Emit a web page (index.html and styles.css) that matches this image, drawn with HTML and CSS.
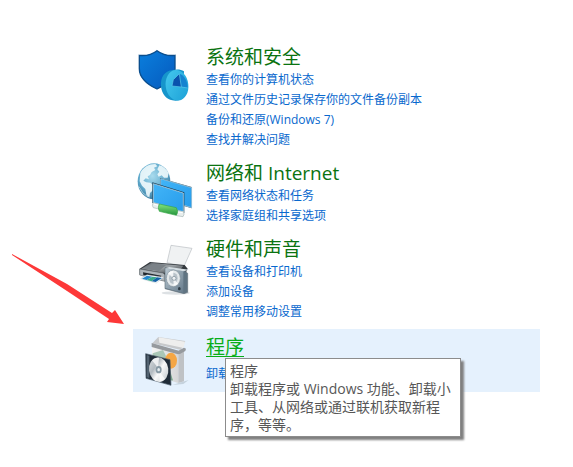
FILE: index.html
```
<!DOCTYPE html>
<html lang="zh-CN">
<head>
<meta charset="utf-8">
<title>控制面板</title>
<link rel="stylesheet" href="styles.css">
</head>
<body>
<main class="panel">
  <section class="category">
    <svg class="icon" viewBox="9 9 192 180" aria-hidden="true">
      <defs>
        <linearGradient id="shield" x1="0" y1="0" x2="1" y2="1"><stop offset="0" stop-color="#0a7fdd"/><stop offset="1" stop-color="#0559bd"/></linearGradient>
        <linearGradient id="pie" x1="0" y1="0" x2="1" y2="1"><stop offset="0" stop-color="#45c8ee"/><stop offset="1" stop-color="#1ba0d6"/></linearGradient>
      </defs>
      <path d="M81 29C67 40 47 45 28 43V83C28 114 54 131 81 144C108 131 135 114 135 83V43C116 45 96 40 81 29Z" fill="url(#shield)" stroke="#0b4e8d" stroke-width="4"/>
      <path d="M125 88C103 91 91 109 93 136C95 159 109 175 127 178C138 181 151 178 158 172L162 91C152 84 138 84 125 88Z" fill="#1695cb"/>
      <ellipse cx="141" cy="133" rx="34" ry="46" transform="rotate(-7 141 133)" fill="url(#pie)"/>
      <path d="M148 98C163 103 172 118 173 140L154 137Z" fill="#1583d0"/>
      <path d="M126 135L130 116L148 98L154 138Z" fill="#0952ad"/>
      <path d="M126 135L130 116L148 98L154 138L173 141M126 135L154 138" fill="none" stroke="#5bc8e8" stroke-width="2"/>
    </svg>
    <div class="text">
      <h2><a href="#security">系统和安全</a></h2>
      <ul>
        <li><a href="#status">查看你的计算机状态</a></li>
        <li><a href="#history">通过文件历史记录保存你的文件备份副本</a></li>
        <li><a href="#backup">备份和还原(Windows 7)</a></li>
        <li><a href="#troubleshoot">查找并解决问题</a></li>
      </ul>
    </div>
  </section>

  <section class="category">
    <svg class="icon" viewBox="9 12 192 180" aria-hidden="true">
      <defs>
        <radialGradient id="globe" cx=".45" cy=".35" r=".65"><stop offset="0" stop-color="#a9dbee"/><stop offset=".65" stop-color="#5fa9cb"/><stop offset="1" stop-color="#39799f"/></radialGradient>
        <linearGradient id="screen" x1="0" y1="0" x2="1" y2="1"><stop offset="0" stop-color="#42b5f8"/><stop offset="1" stop-color="#279ceb"/></linearGradient>
        <linearGradient id="plug" x1="0" y1="0" x2="0" y2="1"><stop offset="0" stop-color="#83e57e"/><stop offset="1" stop-color="#24933c"/></linearGradient>
      </defs>
      <ellipse cx="72" cy="76" rx="49" ry="54" fill="url(#globe)"/>
      <path d="M31 51C39 34 57 24 76 24L82 31L72 35L76 42L65 48L60 57L53 61L57 70L47 67L40 74L49 79L61 80L72 90L67 104L60 111L58 125L49 116L46 99L36 89L29 76ZM88 28C100 31 111 40 116 52L113 65H102L95 58L86 62L82 55L88 47L82 40Z" fill="#eff9fc" opacity=".9"/>
      <path d="M27 92Q36 113 54 123M95 119L109 105" fill="none" stroke="#c0e4ef" stroke-width="2"/>
      <path d="M90 66L185 93V157L90 128Z" fill="#17425e"/>
      <path d="M92 68L185 95V155L92 127Z" fill="url(#screen)" stroke="#bed9e6" stroke-width="2"/>
      <path d="M67 79L163 109V171L67 141Z" fill="#123c58"/>
      <path d="M70 83L160 111V168L70 140Z" fill="url(#screen)" stroke="#cde2ec" stroke-width="2"/>
      <path d="M70 140L87 144V159L70 155Q64 148 70 140ZM140 164L160 166Q165 175 159 182L140 179Z" fill="#e8eeed" stroke="#a7b6b5" stroke-width="2"/>
      <path d="M88 144L139 155Q147 166 139 178L88 166Q82 155 88 144Z" fill="url(#plug)" stroke="#35a644" stroke-width="2"/>
      <path d="M71 144L84 148M144 168L158 170" stroke="#fff" stroke-width="3"/>
    </svg>
    <div class="text">
      <h2><a href="#network">网络和 Internet</a></h2>
      <ul>
        <li><a href="#network-status">查看网络状态和任务</a></li>
        <li><a href="#homegroup">选择家庭组和共享选项</a></li>
      </ul>
    </div>
  </section>

  <section class="category">
    <svg class="icon" viewBox="9 0 192 180" aria-hidden="true">
      <defs>
        <linearGradient id="printer" x1="0" y1="0" x2="1" y2="1"><stop offset="0" stop-color="#555b62"/><stop offset=".5" stop-color="#9ca2a6"/><stop offset="1" stop-color="#30353a"/></linearGradient>
        <linearGradient id="speaker" x1="0" y1="0" x2="1" y2="1"><stop offset="0" stop-color="#b8c6cf"/><stop offset="1" stop-color="#667b8b"/></linearGradient>
      </defs>
      <ellipse cx="137" cy="171" rx="42" ry="5" fill="#dde1e4"/>
      <path d="M123 28L186 37L162 91L111 80Z" fill="#f0f2f3" stroke="#b9bec2" stroke-width="2"/>
      <path d="M29 98L60 78L164 87L173 98L158 131L106 128L29 115Z" fill="#34393e"/>
      <path d="M34 98L64 80L160 89L143 112L99 110Z" fill="url(#printer)"/>
      <path d="M68 84L108 87L87 105L43 99Z" fill="#7b8288"/>
      <path d="M29 99L99 111L105 117V136L29 117Z" fill="#aeb5ba" stroke="#62696e" stroke-width="2"/>
      <path d="M39 109L94 119L91 128L40 117Z" fill="#20262b"/>
      <path d="M51 116L101 124L79 141L32 128Z" fill="#f7fbfd" stroke="#a3b3bd" stroke-width="1"/>
      <path d="M51 119L67 122L50 132L36 128Z" fill="#2587cc"/>
      <path d="M67 122L81 124L65 136L50 132Z" fill="#3aaa8a"/>
      <path d="M81 124L96 126L77 138L65 136Z" fill="#1462a6"/>
      <path d="M105 95L160 102L173 112V169L162 173L105 158Z" fill="#607482" stroke="#65727b" stroke-width="2"/>
      <path d="M106 97L160 105V171L106 156Z" fill="url(#speaker)"/>
      <path d="M106 97L118 93L177 101L161 106Z" fill="#d4dde2"/>
      <ellipse cx="130" cy="127" rx="21" ry="25" fill="#e4e9eb" stroke="#82919b" stroke-width="2"/>
      <ellipse cx="130" cy="127" rx="13" ry="17" fill="#b8c2c9"/>
      <path d="M130 127L114 112Q122 104 130 105ZM130 127L144 143Q137 149 131 149Z" fill="#fff" opacity=".8"/>
      <circle cx="132" cy="127" r="6" fill="#eef1f3" stroke="#788994" stroke-width="2"/>
      <ellipse cx="148" cy="158" rx="4" ry="5" fill="#2d3a43"/>
    </svg>
    <div class="text">
      <h2><a href="#hardware">硬件和声音</a></h2>
      <ul>
        <li><a href="#devices">查看设备和打印机</a></li>
        <li><a href="#add-device">添加设备</a></li>
        <li><a href="#mobility">调整常用移动设置</a></li>
      </ul>
    </div>
  </section>

  <section class="category active">
    <svg class="icon" viewBox="9 27 192 180" aria-hidden="true">
      <defs>
        <linearGradient id="box" x1="0" y1="0" x2="1" y2="0"><stop offset="0" stop-color="#f4f4f3"/><stop offset="1" stop-color="#d5d6d7"/></linearGradient>
        <linearGradient id="disc" x1="0" y1="0" x2="1" y2="1"><stop offset="0" stop-color="#dce0e2"/><stop offset=".35" stop-color="#b2bac0"/><stop offset=".55" stop-color="#fafafa"/><stop offset="1" stop-color="#bac2c7"/></linearGradient>
      </defs>
      <path d="M146 174L176 165L160 177L127 180Z" fill="#c5d2dd"/>
      <path d="M66 55L145 78V174L66 151Z" fill="url(#box)"/>
      <path d="M145 78L162 69V169L145 174Z" fill="#bfc2c5"/>
      <path d="M67 55L85 36L166 48L153 75Z" fill="#c7c9cb"/>
      <path d="M86 37L165 50L161 69L88 53Z" fill="#eeeeed"/>
      <path d="M65 54L146 77L152 86L144 88L65 66ZM146 77L162 68L168 71L166 78L151 86Z" fill="#969a9e"/>
      <path d="M68 85L99 75L108 93L107 129L122 158L129 168L67 150Z" fill="#aac7b7"/>
      <ellipse cx="123" cy="107" rx="18" ry="24" fill="#f5a644"/>
      <path d="M118 131L129 166L107 163Z" fill="#7fae90"/>
      <path d="M47 86L120 104L123 181L48 160Z" fill="#202c38" stroke="#4c5c69" stroke-width="2"/>
      <path d="M50 90L58 92V159L50 157Z" fill="#51616f"/>
      <ellipse cx="86" cy="134" rx="29" ry="37" transform="rotate(-7 86 134)" fill="url(#disc)"/>
      <path d="M84 128L66 106Q76 96 87 99ZM88 139L105 162Q97 170 89 169Z" fill="#fff" opacity=".75"/>
      <ellipse cx="86" cy="134" rx="9" ry="11" fill="#8799a4"/>
      <ellipse cx="86" cy="134" rx="4" ry="5" fill="#e9eff2"/>
    </svg>
    <div class="text">
      <h2><a href="#programs" aria-describedby="tip">程序</a></h2>
      <ul>
        <li><a href="#uninstall">卸载</a></li>
      </ul>
      <div class="tooltip" id="tip" role="tooltip">程序<br>卸载程序或 Windows 功能、卸载小工具、从网络或通过联机获取新程序，等等。</div>
    </div>
  </section>
</main>
<svg class="arrow" viewBox="0 0 113 71" aria-hidden="true"><path d="M0 0L55 30L100 59L103 56L112 70L95 68L97 65L55 37L0 1Z" fill="#fd3838"/></svg>
</body>
</html>
```
FILE: styles.css
```
* { box-sizing: border-box; }

body {
  position: relative;
  min-height: 100vh;
  margin: 0;
  background: #fff;
  font-family: "Open Sans", "Noto Sans CJK SC", sans-serif;
  font-size: 12px;
  line-height: 20px;
}

.panel { padding: 39px 33px 0 133px; }

.category {
  display: flex;
  gap: 9px;
  padding: 5px 0;
}

.icon {
  flex: none;
  width: 64px;
  height: 60px;
}

.text { position: relative; flex: 1; }

h2 {
  margin: 0;
  font-size: 19px;
  font-weight: 400;
  line-height: 26px;
}

h2 a { color: #0a7310; text-decoration: none; }

ul { margin: 0; padding: 0; list-style: none; }

li a { color: #0868ce; text-decoration: none; }

.active {
  margin-top: 2px;
  padding-bottom: 0;
  background: #e5f1fd;
}

.active .icon { margin-bottom: -2px; }

.active h2 { margin-bottom: 4px; }

.active h2 a {
  color: #08ad19;
  text-decoration: underline;
  text-decoration-thickness: 1px;
  text-underline-offset: 2px;
}

.tooltip {
  position: absolute;
  top: 24px;
  left: 19px;
  width: 236px;
  padding: 3px 4px 2px;
  border: 1px solid #8c8c8c;
  background: #fff;
  box-shadow: 3px 3px 2px #808080;
  color: #575757;
  font-size: 14px;
  line-height: 18px;
}

.arrow {
  position: absolute;
  top: 254px;
  left: 12px;
  width: 113px;
  height: 71px;
}
```
